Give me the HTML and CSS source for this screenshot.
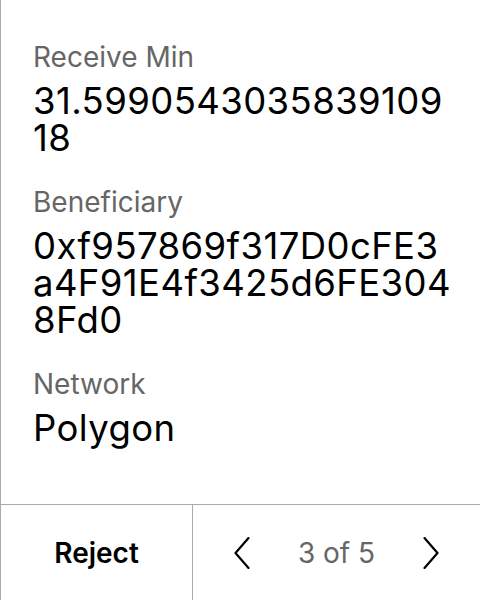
FILE: index.html
```html
<!DOCTYPE html>
<html lang="en">
<head>
<meta charset="utf-8">
<link rel="stylesheet" href="styles.css">
</head>
<body>
<div class="panel">
  <div class="details">
    <div class="field">
      <div class="label">Receive Min</div>
      <div class="value">31.599054303583910918</div>
    </div>
    <div class="field">
      <div class="label">Beneficiary</div>
      <div class="value">0xf957869f317D0cFE3a4F91E4f3425d6FE3048Fd0</div>
    </div>
    <div class="field">
      <div class="label">Network</div>
      <div class="value">Polygon</div>
    </div>
  </div>
  <div class="actions">
    <button class="reject">Reject</button>
    <div class="pager">
      <svg class="chev" viewBox="0 0 16 32" width="16" height="32"><path d="M14.5 1 L1.5 16 L14.5 31" fill="none" stroke="#000" stroke-width="2.2" stroke-linecap="round" stroke-linejoin="round"/></svg>
      <span class="count">3 of 5</span>
      <svg class="chev" viewBox="0 0 16 32" width="16" height="32"><path d="M1.5 1 L14.5 16 L1.5 31" fill="none" stroke="#000" stroke-width="2.2" stroke-linecap="round" stroke-linejoin="round"/></svg>
    </div>
  </div>
</div>
</body>
</html>
```

FILE: styles.css
```css
* { box-sizing: border-box; }
html, body { margin: 0; padding: 0; background: #fff; }
body { font-family: Inter, "Noto Sans", sans-serif; color: #000; }
.panel {
  width: 480px;
  height: 600px;
  border-left: 1px solid #ababab;
  display: flex;
  flex-direction: column;
}
.details {
  flex: 1;
  padding: 40px 28px 0 32px;
  display: flex;
  flex-direction: column;
  gap: 28px;
}
.label {
  font-size: 28px;
  line-height: 34px;
  color: #666;
  margin-bottom: 9px;
}
.value {
  font-size: 36.5px;
  line-height: 37px;
  letter-spacing: 0.4px;
  word-break: break-all;
  color: #000;
}
.actions {
  height: 96px;
  border-top: 1px solid #ababab;
  display: grid;
  grid-template-columns: 192px 1fr;
}
.reject {
  font-family: inherit;
  font-size: 28px;
  font-weight: 600;
  background: none;
  border: none;
  border-right: 1px solid #ababab;
  color: #000;
  padding: 0;
  margin: 0;
}
.pager {
  display: flex;
  align-items: center;
  justify-content: center;
  gap: 48px;
}
.count {
  font-size: 28px;
  color: #666;
}
```
